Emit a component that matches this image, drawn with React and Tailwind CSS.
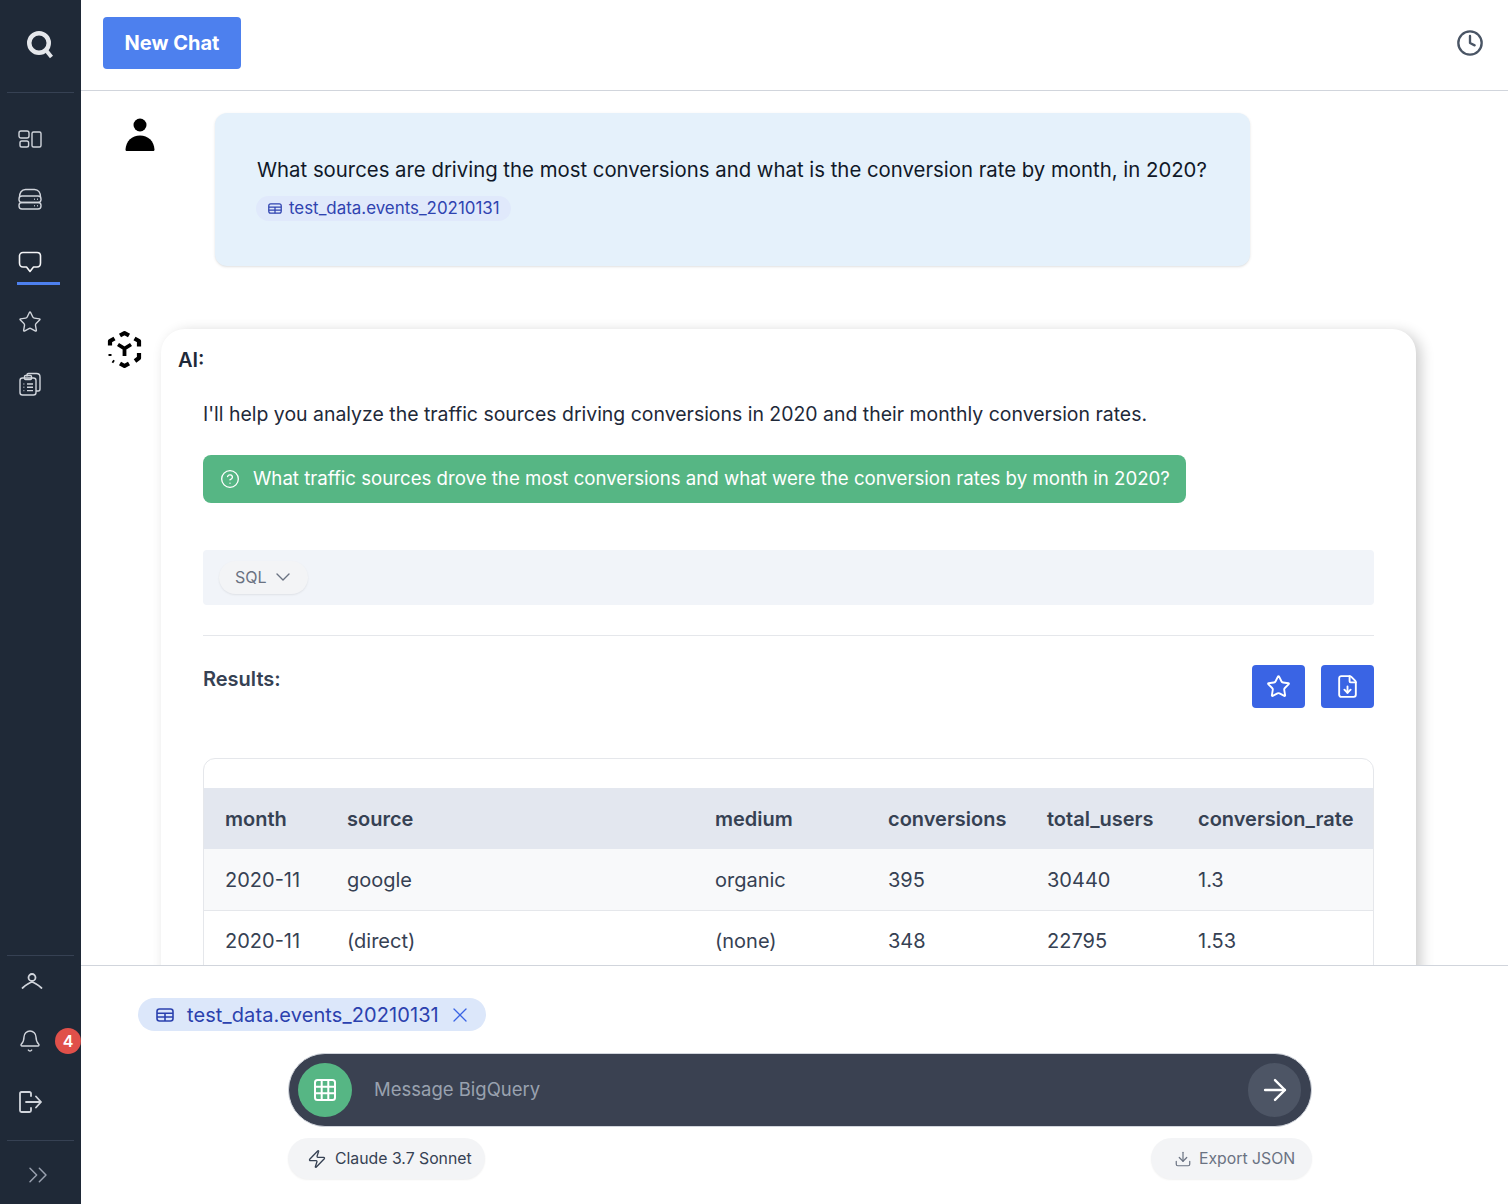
import React from "react";
import {
  Bell, ChevronDown, ChevronsRight, CircleHelp, Clock, Download, FileDown, Star, X, Zap, ArrowRight,
} from "lucide-react";

const columns = [
  { key: "month", width: "w-[122px]" },
  { key: "source", width: "w-[368px]" },
  { key: "medium", width: "w-[173px]" },
  { key: "conversions", width: "w-[159px]" },
  { key: "total_users", width: "w-[151px]" },
  { key: "conversion_rate", width: "w-[196px]" },
];

const rows = [
  { month: "2020-11", source: "google", medium: "organic", conversions: "395", total_users: "30440", conversion_rate: "1.3" },
  { month: "2020-11", source: "(direct)", medium: "(none)", conversions: "348", total_users: "22795", conversion_rate: "1.53" },
];

function Logo() {
  return (
    <svg width="28" height="30" viewBox="0 0 28 30" fill="none" stroke="#e5e7eb" strokeWidth="4.5">
      <circle cx="14" cy="14" r="9.750" />
      <path d="M20 20l6.500 8" strokeWidth="4" />
    </svg>
  );
}

function DashIcon() {
  return (
    <svg width="24" height="24" viewBox="0 0 24 24" fill="none" stroke="currentColor" strokeWidth="1.4">
      <rect x="1" y="4" width="10" height="7" rx="2" />
      <rect x="2" y="14" width="8.600" height="6" rx="1.800" />
      <rect x="14" y="5" width="9" height="15" rx="1.500" />
    </svg>
  );
}

function ServerIcon() {
  return (
    <svg width="24" height="24" viewBox="0 0 24 24" fill="none" stroke="currentColor" strokeWidth="1.4">
      <path d="M1.500 10c0-4 2-7.500 6-7.500h9c4 0 6 3.500 6 7.500" />
      <rect x="1" y="9" width="22" height="6.500" rx="3" />
      <rect x="1" y="15.500" width="22" height="6.500" rx="3" />
      <path d="M16 12.200h.8M19 12.200h.8M16 18.700h.8M19 18.700h.8" />
    </svg>
  );
}

function ChatIcon() {
  return (
    <svg width="24" height="24" viewBox="0 0 24 24" fill="none" stroke="#f3f4f6" strokeWidth="1.600">
      <path d="M5 1.500h14c2 0 3.500 1.500 3.500 3.500v7c0 2.500-1.500 4-3.500 4h-3.500l-3.500 4.500-3.500-4.500H5c-2 0-3.500-1.500-3.500-4V5c0-2 1.500-3.500 3.500-3.500z" strokeLinejoin="round" />
    </svg>
  );
}

function ClipboardsIcon() {
  return (
    <svg width="24" height="24" viewBox="0 0 24 24" fill="none" stroke="currentColor" strokeWidth="1.400" strokeLinejoin="round">
      <path d="M9 4.500V3c0-1 .7-1.500 1.500-1.500h8c2 0 3.500 1.500 3.500 3.500v12c0 1.300-.8 2-1.800 2H18" />
      <rect x="2" y="6" width="16" height="17" rx="2.500" />
      <rect x="6.500" y="3.500" width="7" height="4" rx="1" />
      <path d="M9 12h6M9 15.300h6M9 18.600h6M5.500 12h.8M5.500 15.300h.8M5.500 18.600h.8" />
    </svg>
  );
}

function UserLineIcon() {
  return (
    <svg width="24" height="24" viewBox="0 0 24 24" fill="none" stroke="currentColor" strokeWidth="1.800" strokeLinecap="round">
      <circle cx="12" cy="8.500" r="3.500" />
      <path d="M2.500 19C6 16 9 13.800 12 13c3 .8 6 3 9.500 6" />
    </svg>
  );
}

function LogoutIcon() {
  return (
    <svg width="24" height="24" viewBox="0 0 24 24" fill="none" stroke="currentColor" strokeWidth="1.800" strokeLinecap="round" strokeLinejoin="round">
      <path d="M13 6V3.500C13 2.500 12.300 2 11.500 2H3.500C2.500 2 2 2.700 2 3.500v17c0 1 .7 1.500 1.500 1.500h8c1 0 1.500-.7 1.500-1.500V18" />
      <path d="M8 12h15M18 6.500l5 5.500-5 5.500" />
    </svg>
  );
}

function PersonIcon() {
  return (
    <svg width="30" height="34" viewBox="0 0 30 34" fill="black">
      <circle cx="15" cy="7" r="6.500" />
      <path d="M0.500 31.500C1 23 7 17.500 15 17.500s14 5.500 14.500 14c0 1-.6 1.500-1.500 1.500H2c-1 0-1.500-.5-1.500-1.500z" />
    </svg>
  );
}

function AiIcon() {
  return (
    <svg width="36" height="40" viewBox="0 0 36 40" fill="none" stroke="black" strokeWidth="4.200" strokeLinejoin="round">
      <path d="M13 5.500L17.500 3L22 5.500" />
      <path d="M27.500 8.500L32 11V16.500" />
      <path d="M32 23V28L28 31" />
      <path d="M13 33.500L17.500 36L22 33.500" />
      <path d="M3 24V26M5.500 31L7 32" strokeWidth="3" />
      <path d="M7.500 8.500L3 11V15.500" />
      <path d="M11 14.500L17.500 18.500L24 14.500M17.500 18.500V26" strokeWidth="3.800" strokeLinejoin="miter" />
    </svg>
  );
}

function TableIcon({ className }) {
  return (
    <svg className={className} viewBox="0 0 18 14" fill="none" stroke="currentColor" strokeWidth="1.600">
      <rect x="1" y="1" width="16" height="12" rx="2.500" />
      <path d="M1 5.200h16M1 9h16M9 5.200V13" />
    </svg>
  );
}

function GridIcon() {
  return (
    <svg width="24" height="24" viewBox="0 0 24 24" fill="none" stroke="white" strokeWidth="2">
      <rect x="2" y="2" width="20" height="20" rx="2.500" />
      <path d="M8.700 2v20M15.300 2v20M2 8.700h20M2 15.300h20" />
    </svg>
  );
}

function NavItem({ children, className = "" }) {
  return <div className={`flex items-center text-gray-300 ${className}`}>{children}</div>;
}

function Sidebar() {
  return (
    <aside className="w-[81px] h-full flex-none bg-[#1f2937] flex flex-col">
      <div className="h-[92px] pl-[25px] pt-[29px]">
        <Logo />
      </div>
      <div className="mx-[7px] border-t border-gray-700" />
      <nav className="pl-[18px] pt-[34px] flex flex-col">
        <NavItem className="h-[24px]"><DashIcon /></NavItem>
        <NavItem className="h-[24px] mt-[36px]"><ServerIcon /></NavItem>
        <NavItem className="h-[24px] mt-[40px]"><ChatIcon /></NavItem>
        <div className="w-[43px] h-[3px] bg-[#4d80ee] -ml-px mt-[7px]" />
        <NavItem className="h-[24px] mt-[25px]"><Star size={24} strokeWidth={1.4} /></NavItem>
        <NavItem className="h-[24px] mt-[38px]"><ClipboardsIcon /></NavItem>
      </nav>
      <div className="mt-auto mx-[7px] border-t border-gray-700" />
      <div className="pl-[20px] pt-[13px] flex flex-col">
        <NavItem className="h-[24px]"><UserLineIcon /></NavItem>
        <div className="relative h-[24px] mt-[36px] flex items-center text-gray-300 -ml-[2px]">
          <Bell size={24} strokeWidth={1.4} />
          <span className="absolute left-[37px] top-[-1px] w-[26px] h-[26px] rounded-full bg-[#e0504a] text-white text-[16px] font-semibold flex items-center justify-center">4</span>
        </div>
        <NavItem className="h-[24px] mt-[37px] -ml-[2px]"><LogoutIcon /></NavItem>
      </div>
      <div className="mt-[26px] mx-[7px] border-t border-gray-700" />
      <div className="h-[63px] pl-[22px] pt-[4px] flex items-center text-gray-400">
        <ChevronsRight size={32} strokeWidth={1.100} />
      </div>
    </aside>
  );
}

function AiCard() {
  return (
    <div className="w-[1255px] ml-[54px] bg-white rounded-[24px] shadow-[5px_3px_14px_rgba(0,0,0,0.2)] pt-[18px] pb-[60px] pl-[17px] pr-[42px]">
      <p className="text-[20px] leading-[26px] font-semibold text-gray-800">AI:</p>
      <div className="pl-[25px]">
        <p className="mt-[28px] text-[19.450px] leading-[26px] text-gray-800">
          I'll help you analyze the traffic sources driving conversions in 2020 and their monthly conversion rates.
        </p>
        <div className="mt-[28px] w-fit h-[48px] rounded-lg bg-[#56b684] text-white flex items-center pl-[17px] pr-[16px] gap-[13px]">
          <CircleHelp size={20} strokeWidth={1.600} />
          <span className="text-[18.650px]">What traffic sources drove the most conversions and what were the conversion rates by month in 2020?</span>
        </div>
        <div className="mt-[47px] h-[55px] rounded bg-[#f1f4f9] pl-[16px] flex items-center">
          <div className="h-[33px] w-[89px] rounded-full bg-gray-100 shadow-[0_1px_2px_rgba(0,0,0,0.08)] flex items-center pl-[16px] pb-[1px] gap-[4px] text-gray-500 text-[16px]">
            SQL
            <ChevronDown size={24} strokeWidth={1.400} />
          </div>
        </div>
        <div className="mt-[30px] border-t border-gray-200" />
        <div className="mt-[29px] flex justify-between">
          <p className="text-[20px] leading-[28px] font-semibold text-gray-700">Results:</p>
          <div className="flex gap-[16px]">
            <button className="w-[53px] h-[43px] rounded bg-[#3a64e4] text-white flex items-center justify-center">
              <Star size={25} strokeWidth={1.800} />
            </button>
            <button className="w-[53px] h-[43px] rounded bg-[#3a64e4] text-white flex items-center justify-center">
              <FileDown size={25} strokeWidth={1.800} />
            </button>
          </div>
        </div>
        <div className="mt-[50px] border border-gray-200 rounded-t-xl pt-[29px] overflow-hidden">
          <table className="table-fixed w-full text-[20px] text-gray-700">
            <colgroup>
              {columns.map((c) => <col key={c.key} className={c.width} />)}
            </colgroup>
            <thead>
              <tr className="bg-[#e3e7ef] h-[61px]">
                {columns.map((c) => (
                  <th key={c.key} className="text-left font-semibold pl-[21px] whitespace-nowrap">{c.key}</th>
                ))}
              </tr>
            </thead>
            <tbody>
              {rows.map((r, i) => (
                <tr key={i} className={`h-[61px] border-b border-gray-200 ${i === 0 ? "bg-[#f8f9fa]" : "bg-white"}`}>
                  {columns.map((c) => (
                    <td key={c.key} className={`pl-[21px] whitespace-nowrap ${i === 0 ? "pt-[2px]" : ""}`}>{r[c.key]}</td>
                  ))}
                </tr>
              ))}
            </tbody>
          </table>
        </div>
      </div>
    </div>
  );
}

function Footer() {
  return (
    <footer className="h-[239px] flex-none border-t border-gray-300 bg-white pl-[57px] pt-[32px] relative z-10">
      <div className="w-[348px] h-[33px] rounded-full bg-[#dce7fa] text-[#2b41ae] flex items-center pl-[18px] pr-[14px]">
        <TableIcon className="w-[18px] h-[14px]" />
        <span className="ml-[13px] text-[20px] tracking-[0.1px]">test_data.events_20210131</span>
        <X size={24} strokeWidth={1.300} className="ml-auto text-[#3a64e4]" />
      </div>
      <div className="ml-[150px] w-[1024px] mt-[22px] h-[74px] rounded-full bg-[#3a4151] border border-gray-300 flex items-center pl-[9px] pr-[10px]">
        <div className="w-[54px] h-[54px] rounded-full bg-[#56b684] flex items-center justify-center">
          <GridIcon />
        </div>
        <span className="ml-[22px] text-[18.500px] text-gray-400">Message BigQuery</span>
        <div className="ml-auto w-[53px] h-[54px] rounded-full bg-[#4d5565] flex items-center justify-center text-white">
          <ArrowRight size={34} strokeWidth={1.700} />
        </div>
      </div>
      <div className="ml-[150px] w-[1024px] mt-[11px] flex justify-between">
        <div className="w-[197px] h-[41px] rounded-full bg-gray-100 shadow-[0_1px_2px_rgba(0,0,0,0.06)] flex items-center pl-[19px] gap-[8px] text-gray-700 text-[15.800px]">
          <Zap size={20} strokeWidth={1.600} />
          <span>Claude 3.7 Sonnet</span>
        </div>
        <div className="w-[161px] h-[41px] rounded-full bg-gray-100 shadow-[0_1px_2px_rgba(0,0,0,0.06)] flex items-center pl-[23px] gap-[7px] text-gray-500 text-[15.800px]">
          <Download size={18} strokeWidth={1.600} />
          <span>Export JSON</span>
        </div>
      </div>
    </footer>
  );
}

export default function App() {
  return (
    <div className="w-[1508px] h-[1204px] flex overflow-hidden bg-white font-['Inter',sans-serif]">
      <Sidebar />
      <main className="flex-1 min-w-0 flex flex-col h-full">
        <header className="h-[91px] flex-none border-b border-gray-300 flex items-center justify-between pl-[22px] pr-[24px]">
          <button className="w-[138px] h-[52px] -mt-[4px] rounded bg-[#4d80ee] text-white text-[20px] font-bold">New Chat</button>
          <Clock size={28} strokeWidth={2} className="text-gray-600 -mt-[5px]" />
        </header>
        <div className="flex-1 min-h-0 overflow-hidden pl-[44px] pt-[22px]">
          <div className="flex items-start">
            <div className="pt-[5px] w-[90px] flex-none"><PersonIcon /></div>
            <div className="w-[1035px] h-[153px] rounded-xl bg-[#e5f1fb] shadow-sm pl-[42px] pt-[43px]">
              <p className="text-[20.350px] leading-[28px] text-gray-900 whitespace-nowrap">What sources are driving the most conversions and what is the conversion rate by month, in 2020?</p>
              <div className="mt-[12px] w-[255px] -ml-px h-[25px] rounded-full bg-[#e0e9fb] text-[#2f43b0] flex items-center pl-[12px]">
                <TableIcon className="w-[14px] h-[11px]" />
                <span className="ml-[7px] text-[16.900px]">test_data.events_20210131</span>
              </div>
            </div>
          </div>
          <div className="flex items-start mt-[63px] -ml-[18px]">
            <div className="pt-[1px] w-0"><AiIcon /></div>
            <AiCard />
          </div>
        </div>
        <Footer />
      </main>
    </div>
  );
}
